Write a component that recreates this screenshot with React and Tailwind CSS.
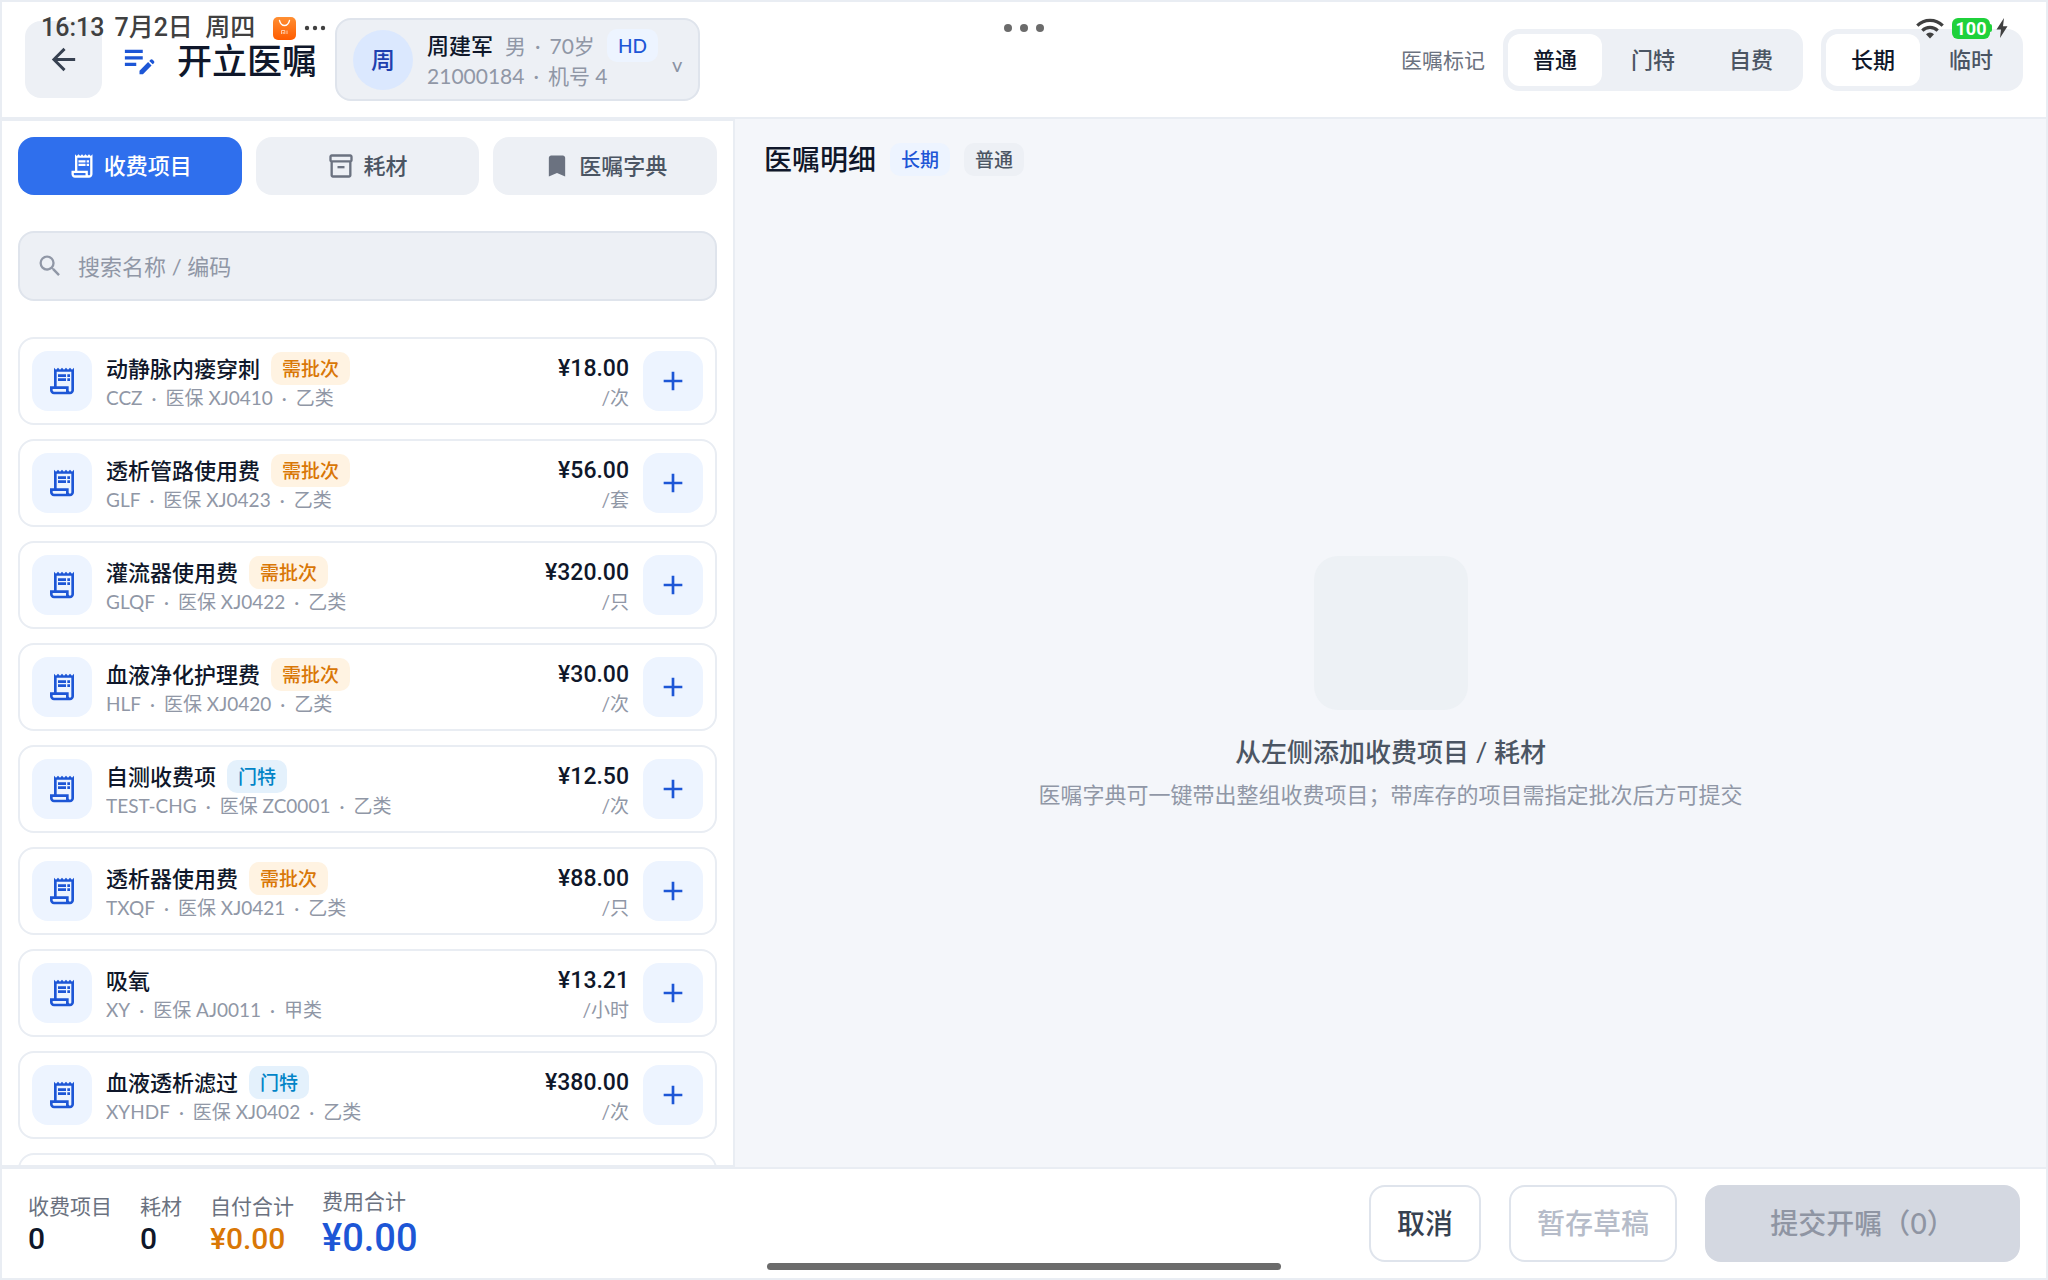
import { useState } from "react";
import clsx from "clsx";
import {
  MdAdd,
  MdArrowBack,
  MdBookmark,
  MdEditNote,
  MdOutlineInventory2,
  MdOutlineReceiptLong,
  MdSearch,
} from "react-icons/md";

const CATALOG_TABS = [
  { id: "charge", label: "收费项目", icon: MdOutlineReceiptLong },
  { id: "supply", label: "耗材", icon: MdOutlineInventory2, iconClass: "text-[#6b7280]" },
  { id: "dict", label: "医嘱字典", icon: MdBookmark, iconClass: "text-[#6b7280]" },
];

const ITEMS = [
  { code: "CCZ", name: "动静脉内瘘穿刺", tag: "需批次", insurance: "XJ0410", grade: "乙类", price: "18.00", unit: "次" },
  { code: "GLF", name: "透析管路使用费", tag: "需批次", insurance: "XJ0423", grade: "乙类", price: "56.00", unit: "套" },
  { code: "GLQF", name: "灌流器使用费", tag: "需批次", insurance: "XJ0422", grade: "乙类", price: "320.00", unit: "只" },
  { code: "HLF", name: "血液净化护理费", tag: "需批次", insurance: "XJ0420", grade: "乙类", price: "30.00", unit: "次" },
  { code: "TEST-CHG", name: "自测收费项", tag: "门特", insurance: "ZC0001", grade: "乙类", price: "12.50", unit: "次" },
  { code: "TXQF", name: "透析器使用费", tag: "需批次", insurance: "XJ0421", grade: "乙类", price: "88.00", unit: "只" },
  { code: "XY", name: "吸氧", tag: "", insurance: "AJ0011", grade: "甲类", price: "13.21", unit: "小时" },
  { code: "XYHDF", name: "血液透析滤过", tag: "门特", insurance: "XJ0402", grade: "乙类", price: "380.00", unit: "次" },
];

const TONES = {
  orange: "bg-[#fff3e2] text-[#d97706]",
  sky: "bg-[#e4f1fc] text-[#0284c7]",
  blue: "bg-[#edf4ff] text-[#1d56d6]",
  gray: "bg-[#edf0f5] text-[#4b5563]",
};

const Tag = ({ tone, children }) => (
  <span className={clsx("shrink-0 rounded-[10px] px-[11px] text-[19px] leading-[33px] font-medium", TONES[tone])}>
    {children}
  </span>
);

const Dot = () => <span className="mx-[9px]">·</span>;

const Segmented = ({ label, options, value, onChange }) => (
  <div role="group" aria-label={label} className="flex gap-1 rounded-2xl bg-[#edf0f5] p-[5px]">
    {options.map((option) => (
      <button
        key={option}
        type="button"
        aria-pressed={option === value}
        onClick={() => onChange(option)}
        className={clsx(
          "rounded-xl px-[25px] text-[22px] leading-[52px] font-medium",
          option === value ? "bg-white text-[#0f172a]" : "text-[#4b5563]"
        )}
      >
        {option}
      </button>
    ))}
  </div>
);

const StatusBar = () => (
  <div className="pointer-events-none absolute inset-x-0 top-0 flex h-[52px] items-center justify-between pr-[38px] pl-[39px] font-['Roboto','Noto_Sans_CJK_SC',sans-serif] text-[#404040]">
    <div className="flex items-center gap-[10px] text-[25px] leading-8 font-medium">
      <span>16:13</span>
      <span>7月2日 &nbsp;周四</span>
      <span className="flex items-center gap-2 pl-2">
        <svg width="23" height="23" viewBox="0 0 23 23" fill="none">
          <defs>
            <linearGradient id="bag" x1="0" y1="0" x2="0" y2="1">
              <stop offset="0" stopColor="#ff8f33" />
              <stop offset="1" stopColor="#ff5c00" />
            </linearGradient>
          </defs>
          <rect width="23" height="23" rx="5" fill="url(#bag)" />
          <path d="M6.5 3.5c.8 3 2.600 5 5 5s4.200-2 5-5" stroke="#fff" strokeWidth="1.300" strokeLinecap="round" />
          <path d="M8.500 17v-3.500h3.300V17M10.200 15v2M14 13.500V17" stroke="#ffe3cf" strokeWidth=".8" />
        </svg>
        <svg width="22" height="6" viewBox="0 0 22 6" fill="currentColor">
          <circle cx="3" cy="3" r="2.200" />
          <circle cx="11" cy="3" r="2.200" />
          <circle cx="19" cy="3" r="2.200" />
        </svg>
      </span>
    </div>
    <div className="absolute left-1/2 flex -translate-x-1/2 gap-2">
      <i className="size-2 rounded-full bg-[#6b6b6b]" />
      <i className="size-2 rounded-full bg-[#6b6b6b]" />
      <i className="size-2 rounded-full bg-[#6b6b6b]" />
    </div>
    <div className="flex items-center gap-2">
      <svg width="28" height="21" viewBox="0 0 28 21" fill="none" stroke="currentColor" strokeWidth="3.200">
        <path d="M1.300 7.600a18 18 0 0 1 25.400 0" />
        <path d="M6.300 12.600a11 11 0 0 1 15.400 0" />
        <path d="M14 20.500l-4-4.300a5.500 5.500 0 0 1 8 0z" fill="currentColor" stroke="none" />
      </svg>
      <div className="flex items-center">
        <span className="w-[38px] rounded-md bg-[#1fd13b] text-center text-[18px] leading-[21px] font-bold text-white">100</span>
        <i className="h-2 w-0.5 rounded-r-sm bg-[#1fd13b]" />
        <svg className="ml-1" width="12" height="20" viewBox="0 0 12 20" fill="currentColor">
          <path d="M8 0L0.500 11.500H5L4 20l7.500-11.800H7z" />
        </svg>
      </div>
    </div>
  </div>
);

const PatientPicker = () => (
  <button
    type="button"
    className="flex shrink-0 items-center gap-[14px] rounded-2xl border-2 border-[#dfe4ec] bg-[#edf0f5] px-4 text-left"
  >
    <span className="flex size-[60px] items-center justify-center rounded-full bg-[#dbe8fe] text-[24px] font-medium text-[#1e40af]">
      周
    </span>
    <span className="flex flex-col py-[9px]">
      <span className="flex items-center gap-3 text-[22px] leading-[33px]">
        <span className="font-medium text-[#0f172a]">周建军</span>
        <span className="text-[21px] text-[#9097a6]">
          男<Dot />70岁
        </span>
        <Tag tone="blue">HD</Tag>
      </span>
      <span className="text-[21px] leading-7 text-[#9097a6]">
        21000184<Dot />机号 4
      </span>
    </span>
    <span className="pt-2 text-[20px] leading-6 text-[#8b93a3]">v</span>
  </button>
);

const ItemCard = ({ item, onAdd }) => (
  <li className="flex shrink-0 items-center gap-[14px] rounded-2xl border-2 border-[#e9edf3] p-3">
    <span className="flex size-[60px] shrink-0 items-center justify-center rounded-2xl bg-[#edf4ff] text-[#1d56d6]">
      <MdOutlineReceiptLong size={32} />
    </span>
    <div className="min-w-0 flex-1">
      <div className="flex items-center gap-[11px]">
        <h3 className="truncate text-[22px] leading-[33px] font-medium text-[#0f172a]">{item.name}</h3>
        {item.tag && <Tag tone={item.tag === "门特" ? "sky" : "orange"}>{item.tag}</Tag>}
      </div>
      <p className="truncate text-[19px] leading-[25px] text-[#9097a6]">
        {item.code}
        <Dot />
        医保 {item.insurance}
        <Dot />
        {item.grade}
      </p>
    </div>
    <div className="text-right">
      <div className="font-['Roboto',sans-serif] text-[23px] leading-[33px] font-medium text-[#0f172a]">
        ¥{item.price}
      </div>
      <div className="text-[19px] leading-[25px] text-[#9097a6]">/{item.unit}</div>
    </div>
    <button
      type="button"
      aria-label={`添加 ${item.name}`}
      onClick={onAdd}
      className="flex size-[60px] shrink-0 items-center justify-center rounded-2xl bg-[#edf4ff] text-[#1d56d6]"
    >
      <MdAdd size={32} />
    </button>
  </li>
);

const Stat = ({ label, value, valueClass }) => (
  <div>
    <dt className="text-[21px] leading-[29px] text-[#6b7280]">{label}</dt>
    <dd className={clsx("font-['Roboto',sans-serif] font-medium", valueClass)}>{value}</dd>
  </div>
);

export default function App() {
  const [tab, setTab] = useState("charge");
  const [mark, setMark] = useState("普通");
  const [term, setTerm] = useState("长期");
  const [keyword, setKeyword] = useState("");
  const [count, setCount] = useState(0);

  const visibleItems = ITEMS.filter((item) => `${item.name}${item.code}`.includes(keyword.trim()));

  return (
    <div className="relative flex h-screen flex-col overflow-hidden border-2 border-[#e9edf3] bg-[#f4f6fa] font-['Lato','Noto_Sans_CJK_SC',sans-serif]">
      <header className="flex shrink-0 items-center justify-between border-b-2 border-[#e9edf3] bg-white px-[23px] py-4">
        <div className="flex items-center gap-[18px]">
          <button
            type="button"
            aria-label="返回"
            className="flex size-[77px] items-center justify-center rounded-2xl bg-[#edf0f5] text-[#374151]"
          >
            <MdArrowBack size={35} />
          </button>
          <MdEditNote size={39} className="text-[#1d56d6]" />
          <h1 className="text-[35px] leading-[48px] font-medium text-[#0f172a]">开立医嘱</h1>
          <PatientPicker />
        </div>
        <div className="flex items-center gap-[18px]">
          <span className="text-[21px] text-[#6b7280]">医嘱标记</span>
          <Segmented label="医嘱标记" options={["普通", "门特", "自费"]} value={mark} onChange={setMark} />
          <Segmented label="医嘱类型" options={["长期", "临时"]} value={term} onChange={setTerm} />
        </div>
      </header>

      <main className="grid min-h-0 flex-1 grid-cols-[733fr_1311fr] grid-rows-[minmax(0,1fr)]">
        <section className="flex min-w-0 flex-col gap-9 overflow-hidden border-y-2 border-r-2 border-[#e9edf3] bg-white px-4 pt-4">
          <div className="grid shrink-0 grid-cols-3 gap-[14px]">
            {CATALOG_TABS.map(({ id, label, icon: Icon, iconClass }) => (
              <button
                key={id}
                type="button"
                aria-pressed={id === tab}
                onClick={() => setTab(id)}
                className={clsx(
                  "flex items-center justify-center gap-2 rounded-2xl text-[22px] leading-[58px] font-medium",
                  id === tab ? "bg-[#2f6fed] text-white" : "bg-[#edf0f5] text-[#4b5563]"
                )}
              >
                <Icon size={28} className={id === tab ? "" : iconClass} />
                {label}
              </button>
            ))}
          </div>

          <label className="flex shrink-0 items-center gap-[14px] rounded-2xl border-2 border-[#dfe4ec] bg-[#edf0f5] px-4">
            <MdSearch size={28} className="text-[#9097a6]" />
            <input
              type="text"
              aria-label="搜索名称 / 编码"
              placeholder="搜索名称 / 编码"
              value={keyword}
              onChange={(e) => setKeyword(e.target.value)}
              className="h-[66px] min-w-0 flex-1 bg-transparent text-[22px] text-[#0f172a] outline-none placeholder:text-[#9097a6]"
            />
          </label>

          <ul className="flex min-h-0 flex-1 flex-col gap-[14px] overflow-hidden">
            {visibleItems.map((item) => (
              <ItemCard key={item.code} item={item} onAdd={() => setCount(count + 1)} />
            ))}
            <li className="h-[88px] shrink-0 rounded-2xl border-2 border-[#e9edf3]" />
          </ul>
        </section>

        <section className="flex min-w-0 flex-col">
          <div className="flex items-center gap-[14px] px-[29px] py-[22px]">
            <h2 className="text-[28px] leading-9 font-medium text-[#0f172a]">医嘱明细</h2>
            <Tag tone="blue">{term}</Tag>
            <Tag tone="gray">{mark}</Tag>
          </div>
          <div className="flex flex-1 flex-col items-center justify-center">
            <div className="size-[154px] rounded-3xl bg-[#edf1f5]" />
            <p className="mt-6 text-[26px] leading-9 font-medium text-[#4b5563]">从左侧添加收费项目 / 耗材</p>
            <p className="mt-[10px] text-[22px] leading-[30px] text-[#9097a6]">
              医嘱字典可一键带出整组收费项目；带库存的项目需指定批次后方可提交
            </p>
          </div>
        </section>
      </main>

      <footer className="flex shrink-0 items-center justify-between border-t-2 border-[#e9edf3] bg-white px-[26px] py-4">
        <dl className="flex items-center gap-7">
          <Stat label="收费项目" value={count} valueClass="text-[30px] leading-[37px] text-[#0f172a]" />
          <Stat label="耗材" value="0" valueClass="text-[30px] leading-[37px] text-[#0f172a]" />
          <Stat label="自付合计" value="¥0.00" valueClass="text-[30px] leading-[37px] text-[#d97706]" />
          <Stat label="费用合计" value="¥0.00" valueClass="text-[38px] leading-[47px] text-[#1d56d6]" />
        </dl>
        <div className="flex items-center gap-7 text-[28px] leading-[73px] font-medium">
          <button type="button" className="rounded-2xl border-2 border-[#dfe4ec] px-[26px] text-[#374151]">
            取消
          </button>
          <button type="button" disabled className="rounded-2xl border-2 border-[#dfe4ec] px-[26px] text-[#b6bcc9]">
            暂存草稿
          </button>
          <button
            type="button"
            disabled
            className="min-w-[315px] rounded-2xl border-2 border-[#d4d8e1] bg-[#d4d8e1] px-[26px] text-[#8f95a3]"
          >
            提交开嘱（{count}）
          </button>
        </div>
      </footer>

      <StatusBar />
      <div className="pointer-events-none absolute bottom-2 left-1/2 h-[7px] w-[514px] -translate-x-1/2 rounded-full bg-[#6b6b6b]" />
    </div>
  );
}
